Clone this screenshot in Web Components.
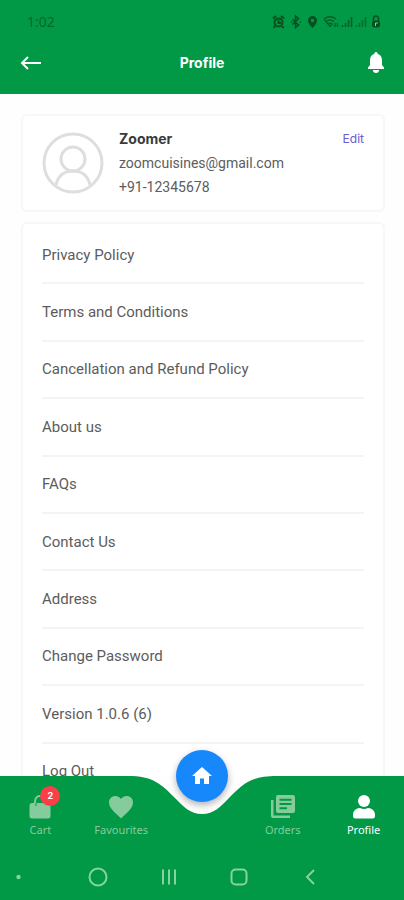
<!DOCTYPE html>
<html lang="en">
<head>
<meta charset="utf-8">
<meta name="viewport" content="width=device-width, initial-scale=1">
<title>Profile</title>
<style>
  html, body { height: 100%; margin: 0; }
  body { font-family: Roboto, "Liberation Sans", sans-serif; color: #5c5c5c; background: #fefefe; }
  profile-screen { height: 100%; }
</style>
</head>
<body>
<profile-screen></profile-screen>
<script>
const define = (name, html, setup) => customElements.define(name, class extends HTMLElement {
  connectedCallback() {
    if (this.shadowRoot) return;
    const root = this.attachShadow({ mode: 'open' });
    const t = document.createElement('template');
    t.innerHTML = html;
    root.append(t.content.cloneNode(true));
    if (setup) setup(this, root);
  }
});

define('status-bar', `
<style>
  :host { display: flex; align-items: center; justify-content: space-between; height: 44px; padding: 0 22px 0 27px; color: #07501f; font: 14px/20px "Noto Sans", sans-serif; }
  span { color: #046a2b; }
  svg { display: block; }
</style>
<span>1:02</span>
<svg width="110" height="14" viewBox="0 0 110 14" fill="none" stroke="currentColor" aria-hidden="true">
  <g stroke-width="2"><circle cx="6.500" cy="7.500" r="4"/><path d="M1 3.500 4 1M12 3.500 9 1M3 11l-1.500 2M10 11l1.500 2M6.500 5v3h2.500"/></g>
  <path stroke-width="1.500" d="m20.500 4.500 6 5.500-3 2.500V1l3 2.500-6 6M19 7h1M28 7h1"/>
  <path fill="currentColor" stroke="none" fill-rule="evenodd" d="M40.500 1a4.500 4.500 0 0 0-4.500 4.500C36 9 40.500 13 40.500 13S45 9 45 5.500A4.500 4.500 0 0 0 40.500 1zm0 2.800a1.700 1.700 0 1 1 0 3.400 1.700 1.700 0 0 1 0-3.400z"/>
  <path stroke-width="1.300" d="M52 4c4-3 8-3 12 0M54 6.500c3-2 5-2 8 0M56 9c1.500-1 3-1 4 0l-2 2.500zM52 4l4 5M63 8v4M65.500 8v4" opacity=".8"/>
  <path stroke-width="1.600" d="M70.500 12v-2M73.500 12V8M76.500 12V5M79.500 12V2" opacity=".75"/>
  <path stroke-width="1.600" d="M84.500 12v-2M87.500 12V8M90.500 12V5M93.500 12V2" opacity=".55"/>
  <path stroke-width="1.500" d="M101.500 6V3.500a2.500 2.500 0 0 1 5 0V6"/><rect x="100.500" y="6" width="7" height="6" rx="1.500" fill="currentColor"/><path d="M103.500 11V8h2.500" stroke="#8fc79b"/>
</svg>`);

define('app-bar', `
<style>
  :host { display: grid; grid-template-columns: 1fr auto 1fr; align-items: center; height: 38px; padding: 0 19px 12px; color: #fff; }
  h1 { margin: 0; font: 700 14px/20px Inter, sans-serif; }
  button { display: flex; padding: 0; border: 0; background: none; color: inherit; }
  .bell { justify-self: end; }
</style>
<button type="button" aria-label="Back"><svg width="22" height="16" viewBox="0 0 22 16" fill="none" stroke="currentColor" stroke-width="2"><path d="M22 8H3M9 2 3 8l6 6"/></svg></button>
<h1><slot></slot></h1>
<button class="bell" type="button" aria-label="Notifications"><svg width="18" height="22" viewBox="0 0 18 22" fill="currentColor"><path d="M9 0C7.900 0 7.300.8 7.300 2 4.400 2.700 3 5 3 8.500v4.500L1 15.500V17h16v-1.500L15 13V8.500C15 5 13.600 2.700 10.700 2 10.700.8 10.100 0 9 0zM5.800 18c.3 2 1.400 3 3.200 3s2.900-1 3.200-3z"/></svg></button>`);

define('user-card', `
<style>
  :host { display: grid; grid-template-columns: 62px 1fr auto; column-gap: 15px; align-items: center; padding: 11px 19px; border: 2px solid #f7f7f7; border-radius: 6px; background: #fff; }
  svg { display: block; }
  .lines { font-size: 14px; line-height: 24px; min-width: 0; }
  h2 { margin: 0; font: 700 14px/24px Inter, sans-serif; color: #3a3a3c; }
  p { margin: 0; }
  a { align-self: start; font: 12px/24px Inter, sans-serif; color: #6a5ad0; text-decoration: none; }
</style>
<svg width="62" height="62" viewBox="0 0 62 62" fill="none" stroke="#dedede" stroke-width="3" aria-hidden="true"><circle cx="31" cy="31" r="29"/><circle cx="31" cy="27" r="12"/><path d="M14 53c2-9 8-14 17-14s15 5 17 14"/></svg>
<div class="lines"><h2><slot name="name"></slot></h2><p><slot name="email"></slot></p><p><slot name="phone"></slot></p></div>
<a href="#edit">Edit</a>`);

define('menu-list', `
<style>
  :host { display: grid; grid-auto-rows: 1fr; min-height: 574px; padding: 3px 19px; border: 2px solid #f7f7f7; border-radius: 6px; background: #fff; }
</style><slot></slot>`);

define('menu-item', `
<style>
  :host { display: flex; border-bottom: 2px solid #f4f4f4; }
  :host(:last-child) { border-color: transparent; }
  a { flex: 1; display: flex; align-items: center; color: inherit; text-decoration: none; font-size: 15px; line-height: 20px; }
</style><a href="#"><slot></slot></a>`);

define('nav-tab', `
<style>
  :host { display: flex; justify-content: center; color: #85cb9b; }
  :host([active]) { color: #fff; }
  a { position: relative; display: flex; flex-direction: column; align-items: center; gap: 2px; color: inherit; text-decoration: none; font: 11px/16px "Noto Sans", sans-serif; }
  .badge { position: absolute; left: 50%; top: -8px; width: 20px; height: 20px; border-radius: 50%; background: #fb3f49; color: #fff; font: 700 9px/20px Inter, sans-serif; text-align: center; }
</style><a href="#"><slot name="icon"></slot><slot></slot></a>`, (el, root) => {
  if (el.hasAttribute('active')) root.querySelector('a').setAttribute('aria-current', 'page');
  const n = el.getAttribute('badge');
  if (n) {
    const b = document.createElement('span');
    b.className = 'badge';
    b.textContent = n;
    root.querySelector('a').append(b);
  }
});

define('tab-bar', `
<style>
  :host { position: relative; display: block; }
  .back { position: absolute; inset: 0; display: flex; }
  .back i { flex: 1; background: #019846; }
  .back svg { display: block; width: 150px; height: 100%; }
  nav { position: relative; display: grid; grid-template-columns: repeat(5, 1fr); padding: 18px 0 16px; }
  .home { justify-self: center; position: relative; width: 52px; }
  .home button { position: absolute; top: -44px; left: 0; width: 52px; height: 52px; padding: 0; border: 0; border-radius: 50%; background: #1688fb; color: #fff; display: grid; place-items: center; box-shadow: 0 3px 7px rgba(0,0,0,.3); }
</style>
<div class="back"><i></i><svg viewBox="0 0 150 78" preserveAspectRatio="none" fill="#019846" aria-hidden="true"><path d="M0 0C27 0 34 8 49 23C57 31 63 38 75 38S93 31 101 23C116 8 123 0 150 0V78H0z"/></svg><i></i></div>
<nav aria-label="Main"><slot name="left"></slot><div class="home"><button type="button" aria-label="Home"><svg width="20" height="18" viewBox="0 0 20 18" fill="currentColor"><path d="M10 0 0 9h3v8h5v-5.500h4V17h5V9h3z"/></svg></button></div><slot name="right"></slot></nav>`);

define('system-bar', `
<style>
  :host { display: grid; grid-template-columns: 62fr 71fr 71fr 70fr 71fr 59fr; align-items: center; justify-items: center; height: 46px; background: #019846; }
  button { display: flex; padding: 0; border: 0; background: none; color: #84d3a0; }
  .dot { justify-self: start; padding-left: 16px; }
  svg { fill: none; stroke: currentColor; stroke-width: 2; }
</style>
<button class="dot" type="button" aria-label="Pin bar"><svg width="5" height="20"><circle cx="2.500" cy="10" r="1.200"  fill="currentColor"/></svg></button>
<button type="button" aria-label="Home screen"><svg width="20" height="20"><circle cx="10" cy="10" r="8.500"/></svg></button>
<button type="button" aria-label="Recents"><svg width="20" height="20"><path d="M4 2.500v15M10 2.500v15M16 2.500v15"/></svg></button>
<button type="button" aria-label="Overview"><svg width="20" height="20"><rect x="2.500" y="2.500" width="15" height="15" rx="4"/></svg></button>
<button type="button" aria-label="System back"><svg width="20" height="20"><path d="M14 3 7 10l7 7"/></svg></button>`);

define('profile-screen', `
<style>
  :host { display: flex; flex-direction: column; overflow: hidden; }
  header { background: #019846; }
  main { flex: 1; min-height: 0; overflow-y: auto; scrollbar-width: none; display: flex; flex-direction: column; gap: 10px; padding: 20px 19px 0 21px; }
  user-card, menu-list { flex: none; }
</style>
<header><status-bar></status-bar><app-bar>Profile</app-bar></header>
<main>
  <user-card><span slot="name">Zoomer</span><span slot="email">zoomcuisines@gmail.com</span><span slot="phone">+91-12345678</span></user-card>
  <menu-list>
    <menu-item>Privacy Policy</menu-item>
    <menu-item>Terms and Conditions</menu-item>
    <menu-item>Cancellation and Refund Policy</menu-item>
    <menu-item>About us</menu-item>
    <menu-item>FAQs</menu-item>
    <menu-item>Contact Us</menu-item>
    <menu-item>Address</menu-item>
    <menu-item>Change Password</menu-item>
    <menu-item>Version 1.0.6 (6)</menu-item>
    <menu-item>Log Out</menu-item>
  </menu-list>
</main>
<footer>
  <tab-bar>
    <nav-tab slot="left" badge="2"><svg slot="icon" width="24" height="26" viewBox="0 0 24 26" fill="currentColor"><path fill-rule="evenodd" d="M4 9h2C6 4 8 1 12 1s6 3 6 8h2a2.500 2.500 0 0 1 2.500 2.500V22A2.500 2.500 0 0 1 20 24.500H4A2.500 2.500 0 0 1 1.500 22V11.500A2.500 2.500 0 0 1 4 9zm4 0h8c0-4-1-6-4-6S8 5 8 9z"/><path d="M8 9v3" stroke="#019846"/></svg>Cart</nav-tab>
    <nav-tab slot="left"><svg slot="icon" width="26" height="26" viewBox="0 0 26 26" fill="currentColor"><path d="M13 24.500C5 17 1 13.500 1 8.500 1 4.500 4 2 7.200 2 9.500 2 11.800 3.200 13 5c1.200-1.800 3.500-3 5.800-3C22 2 25 4.500 25 8.500c0 5-4 8.500-12 16z"/></svg>Favourites</nav-tab>
    <nav-tab slot="right"><svg slot="icon" width="26" height="26" viewBox="0 0 26 26" fill="currentColor"><path fill-rule="evenodd" d="M8 1h15a2 2 0 0 1 2 2v14a2 2 0 0 1-2 2H8a2 2 0 0 1-2-2V3a2 2 0 0 1 2-2zm1.500 3.800v2h12v-2zm0 4.200v2h12V9zm0 4.200v2H17v-2z"/><path d="M1 6h2.500v15.500H20V24H3a2 2 0 0 1-2-2z"/></svg>Orders</nav-tab>
    <nav-tab slot="right" active><svg slot="icon" width="26" height="26" viewBox="0 0 26 26" fill="currentColor"><circle cx="13" cy="7" r="6"/><path d="M9 14q4 2 8 0c4 0 7 3 7 6.500v1.500a2.500 2.500 0 0 1-2.500 2.500h-17A2.500 2.500 0 0 1 2 22v-1.500C2 17 5 14 9 14z"/></svg>Profile</nav-tab>
  </tab-bar>
  <system-bar></system-bar>
</footer>`);
</script>
</body>
</html>
